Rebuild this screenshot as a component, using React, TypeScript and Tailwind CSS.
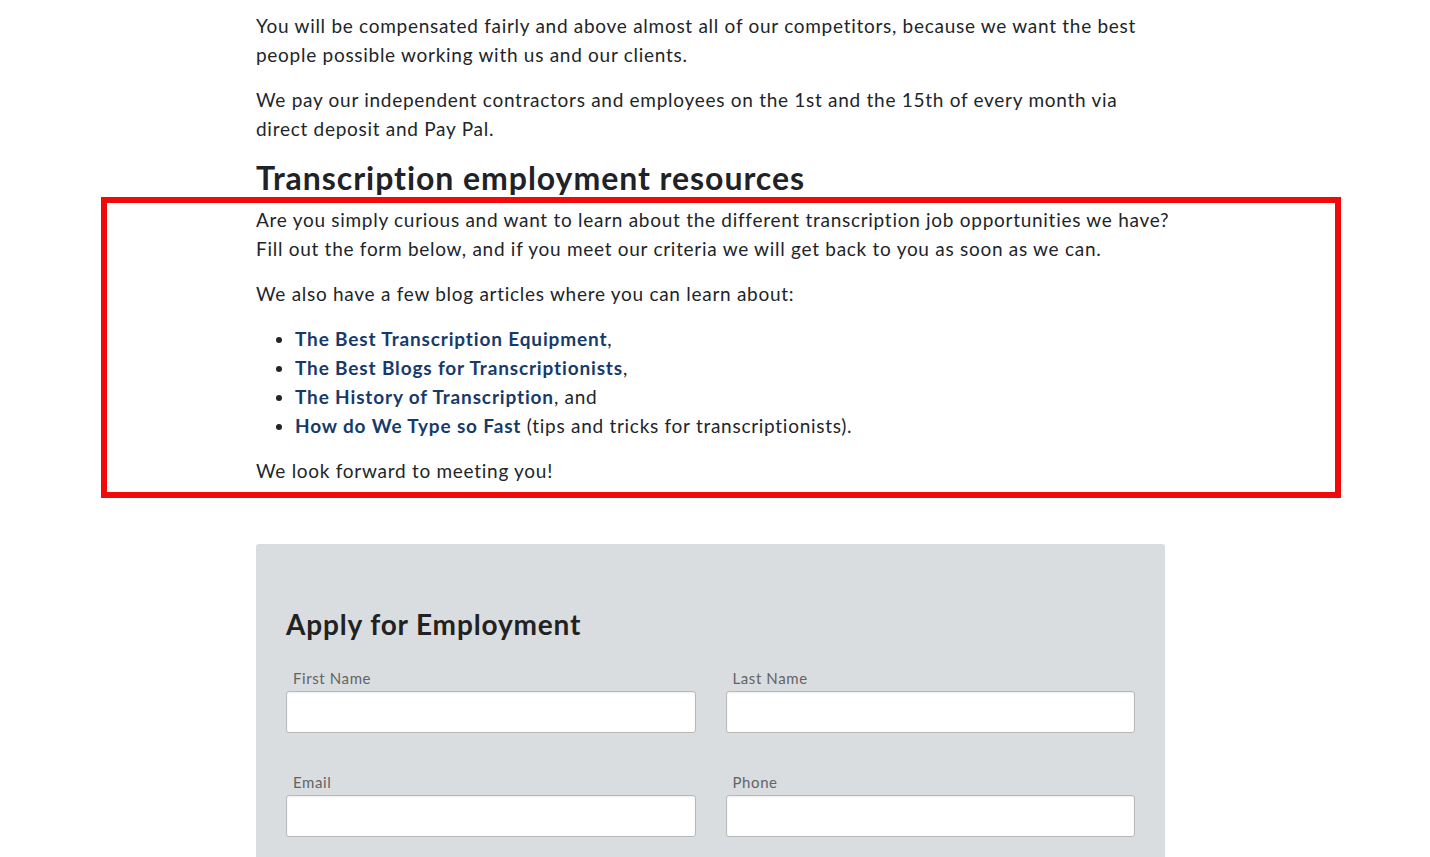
export default function App() {
  const links = [
    { text: "The Best Transcription Equipment", after: "," },
    { text: "The Best Blogs for Transcriptionists", after: "," },
    { text: "The History of Transcription", after: ", and" },
    { text: "How do We Type so Fast", after: " (tips and tricks for transcriptionists)." },
  ];

  return (
    <div className="relative min-h-[857px] overflow-hidden bg-white font-['Lato',sans-serif] text-[#212529]">
      <div className="ml-[256px] w-[915px] pt-[11px] text-[19px] leading-[29px] tracking-[0.72px]">
        <p>
          You will be compensated fairly and above almost all of our competitors, because we want the best people
          possible working with us and our clients.
        </p>
        <p className="mt-4">
          We pay our independent contractors and employees on the 1st and the 15th of every month via direct deposit
          and Pay Pal.
        </p>
        <h2 className="mt-[15px] text-[32px] font-bold leading-[40px] tracking-[0.95px] text-[#1f2226]">
          Transcription employment resources
        </h2>
        <p className="mt-[7px]">
          Are you simply curious and want to learn about the different transcription job opportunities we have?
          <br />
          Fill out the form below, and if you meet our criteria we will get back to you as soon as we can.
        </p>
        <p className="mt-4">We also have a few blog articles where you can learn about:</p>
        <ul className="mt-4 list-disc pl-[39px]">
          {links.map((l) => (
            <li key={l.text}>
              <a href="#" className="font-bold tracking-[0.85px] text-[#173a6b]">
                {l.text}
              </a>
              {l.after}
            </li>
          ))}
        </ul>
        <p className="mt-4">We look forward to meeting you!</p>

        <div className="mt-[59px] w-[909px] rounded-t-[3px] bg-[#dadde0] px-[30px] pt-[60px] pb-10">
          <h3 className="text-[28px] font-bold leading-[40px] tracking-[0.85px] text-[#222]">Apply for Employment</h3>
          <div className="mt-[24px] grid grid-cols-2 gap-x-[30px] gap-y-[39px]">
            {["First Name", "Last Name", "Email", "Phone"].map((label) => (
              <label key={label} className="block">
                <span className="block pl-[7px] text-[15px] leading-[20px] tracking-[0.6px] text-[#636363]">
                  {label}
                </span>
                <input
                  type="text"
                  className="mt-[3px] block h-[42px] w-full rounded-[3px] border border-[#b8b8b8] bg-white shadow-[inset_0_1px_2px_rgba(0,0,0,0.08)]"
                />
              </label>
            ))}
          </div>
        </div>
      </div>

      {/* annotation outline */}
      <div className="pointer-events-none absolute left-[101px] top-[197px] h-[301px] w-[1240px] border-[6px] border-[#f00a0a]" />
    </div>
  );
}
